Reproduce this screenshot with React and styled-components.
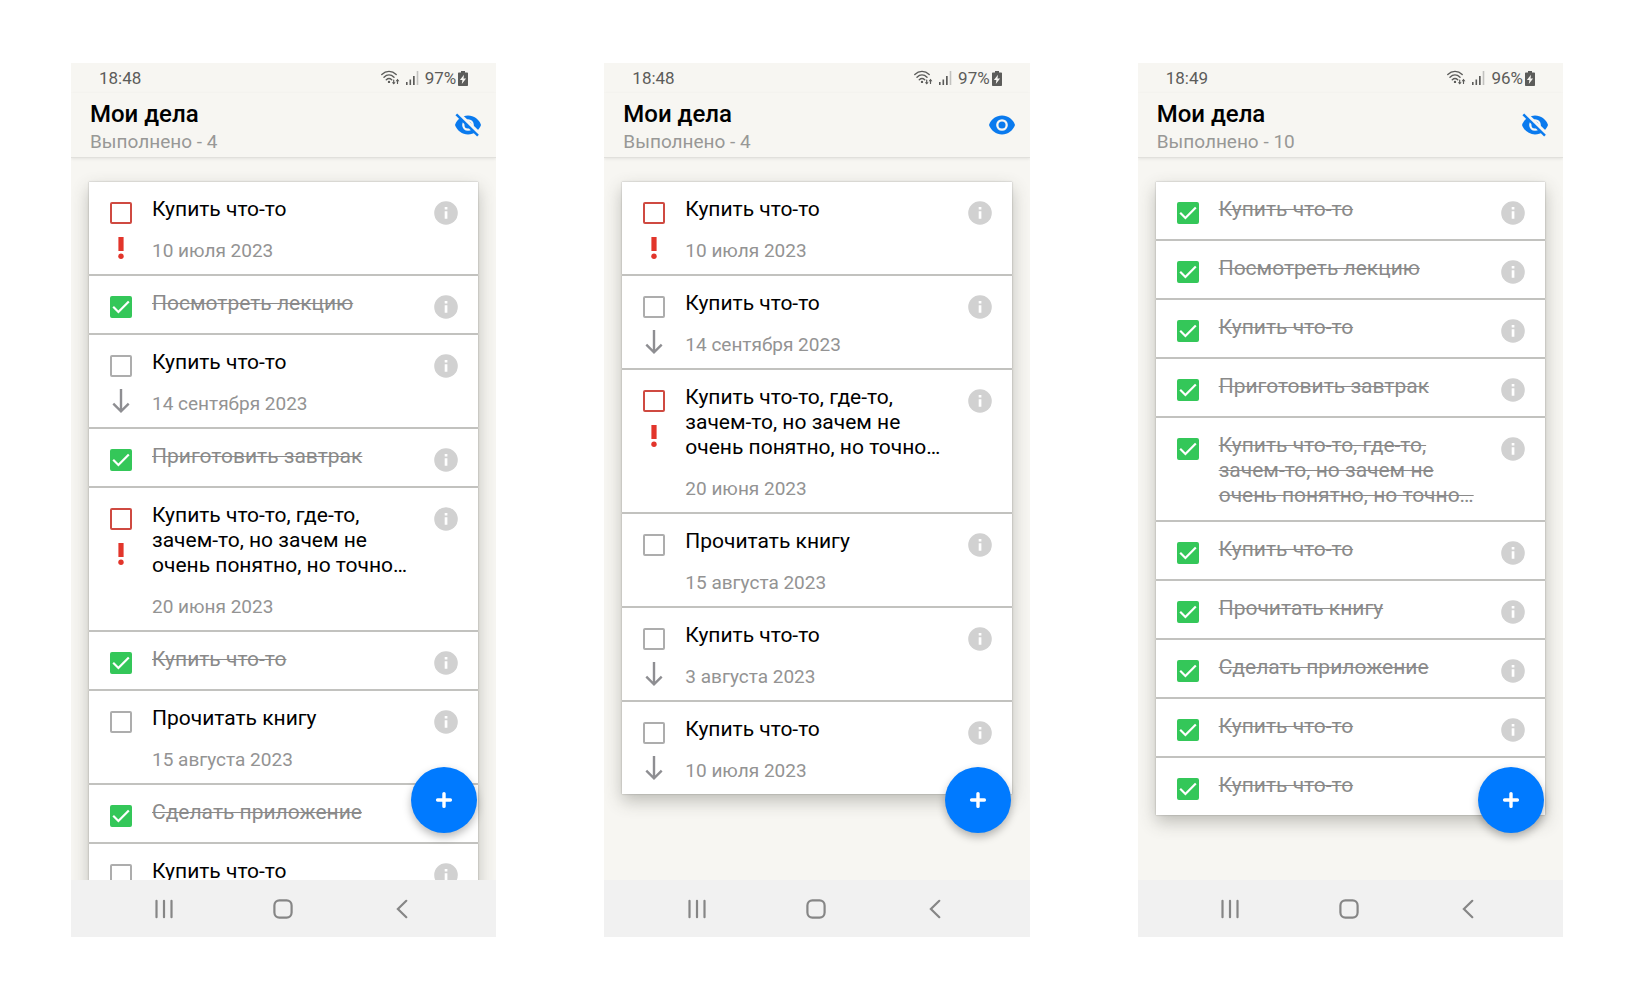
import React from 'react';
import styled, { createGlobalStyle, css } from 'styled-components';

const GlobalStyle = createGlobalStyle`
  * { box-sizing: border-box; }
  body {
    margin: 0;
    background: #ffffff;
    font-family: Roboto, "Noto Sans", sans-serif;
    color: #000000;
  }
  button {
    display: grid;
    place-items: center;
    margin: 0;
    padding: 0;
    border: 0;
    background: none;
    cursor: pointer;
  }
  svg { display: block; }
`;

const Gallery = styled.main`
  display: grid;
  grid-template-columns: repeat(3, minmax(0, 1fr));
  gap: 108px;
  height: 100vh;
  min-height: 640px;
  padding: 63px 71px;
`;

const Phone = styled.section`
  position: relative;
  display: flex;
  flex-direction: column;
  min-height: 0;
  overflow: hidden;
  background: #f7f6f2;
`;

const StatusBar = styled.div`
  display: flex;
  align-items: center;
  flex: none;
  height: 30px;
  padding: 0 28px;
  font-size: 17px;
  line-height: 20px;
  color: #5c5c5a;
`;

const StatusIcons = styled.div`
  display: flex;
  align-items: center;
  gap: 6px;
  margin-left: auto;
`;

const Charge = styled.span`
  display: flex;
  align-items: center;
  gap: 2px;
`;

const Header = styled.header`
  position: relative;
  display: flex;
  align-items: flex-start;
  justify-content: space-between;
  flex: none;
  padding: 6px 15px 2px 19px;
  border-bottom: 1px solid #e1e0dc;
  box-shadow: 0 1px 3px rgba(0, 0, 0, 0.08);
`;

const Title = styled.h1`
  margin: 0;
  font-size: 24px;
  font-weight: 500;
  line-height: 30px;
`;

const Subtitle = styled.p`
  margin: 0;
  font-size: 19px;
  line-height: 26px;
  color: #989896;
`;

const EyeButton = styled.button`
  margin-top: 14px;
  color: #0a7aee;
`;

const Screen = styled.div`
  flex: 1;
  min-height: 0;
  overflow: hidden;
  padding: 24px 18px;
`;

const TaskList = styled.ul`
  display: flex;
  flex-direction: column;
  gap: 2px;
  margin: 0;
  padding: 0;
  list-style: none;
  background: #c9c9c6;
  box-shadow: 0 0 2px rgba(60, 60, 50, 0.2), 0 7px 16px rgba(60, 60, 50, 0.3);
`;

const Task = styled.li`
  display: grid;
  grid-template-columns: 22px minmax(0, 1fr) 24px;
  align-items: start;
  column-gap: 20px;
  min-height: 57px;
  padding: 0 20px 0 21px;
  background: #ffffff;
  box-shadow: 0 0 1px rgba(0, 0, 0, 0.2);
`;

const Marks = styled.div`
  display: flex;
  flex-direction: column;
  align-items: center;
  gap: 12px;
  padding-top: 20px;
`;

const CheckWrap = styled.span`
  display: grid;
  place-items: center;

  & > * { grid-area: 1 / 1; }
  & > svg { pointer-events: none; }
`;

const Check = styled.input`
  appearance: none;
  width: 22px;
  height: 22px;
  margin: 0;
  border: 2px solid ${(p) => (p.$urgent ? '#cf4a41' : '#adadad')};
  border-radius: 2px;
  background: #ffffff;

  &:checked {
    border-color: #34c759;
    background: #34c759;
  }
`;

const Body = styled.div`
  padding: 15px 0 12px;
`;

const Name = styled.label`
  display: block;
  font-size: 21px;
  line-height: 25px;
  ${(p) => p.$done && css`
    color: #8a8a8a;
    text-decoration: line-through;
    text-decoration-thickness: 1px;
  `}
`;

const Due = styled.time`
  display: block;
  margin-top: 18px;
  font-size: 19px;
  line-height: 22px;
  color: #939393;
`;

const InfoButton = styled.button`
  margin-top: 19px;
`;

const AddButton = styled.button`
  position: absolute;
  right: 19px;
  bottom: 104px;
  width: 66px;
  height: 66px;
  border-radius: 50%;
  background: #007aff;
  box-shadow: 0 4px 9px rgba(0, 0, 0, 0.28);
`;

const NavBar = styled.nav`
  display: grid;
  grid-template-columns: repeat(3, 1fr);
  flex: none;
  height: 57px;
  padding: 0 35px 0 33px;
  background: #f1f1f1;
`;

const EyeIcon = ({ crossed }) => (
  <svg width="26" height="24" viewBox="0 0 26 24">
    <path d="M13 2.600C7.100 2.600 2 6.300 0 12c2 5.700 7.100 9.400 13 9.400S24 17.700 26 12C24 6.300 18.900 2.600 13 2.600z" fill="currentColor" />
    <circle cx="13" cy="12" r="4.700" fill="currentColor" stroke="#f7f6f2" strokeWidth="2.300" />
    {crossed && (
      <>
        <path d="M2.500-.2 25 21.600" stroke="#f7f6f2" strokeWidth="4" />
        <path d="M1.300 1.300 23 22.700" stroke="currentColor" strokeWidth="2.400" />
      </>
    )}
  </svg>
);

const WifiIcon = () => (
  <svg width="19" height="16" viewBox="0 0 19 16" fill="none" stroke="#5c5c5a" strokeWidth="1.4" strokeLinecap="round">
    <path d="M.8 4.400C5 .4 11 .4 15.200 4.400M3 7.200c3-2.900 7-2.900 10 0M5.300 9.700c1.700-1.600 3.700-1.600 5.400 0" />
    <circle cx="8" cy="11.900" r="1.200" fill="#5c5c5a" stroke="none" />
    <path d="M12.700 10v3.500M16.500 13.500V10" strokeWidth="1.200" />
    <path d="M10.800 12.200h3.800l-1.900 2.400zM14.600 11.200h3.800l-1.900-2.400z" fill="#5c5c5a" stroke="none" />
  </svg>
);

const SignalIcon = () => (
  <svg width="13" height="14" viewBox="0 0 13 14">
    <path d="M0 11h1.600v3H0zM3.500 8.500h1.600V14H3.500zM7 5h1.700v9H7z" fill="#5c5c5a" />
    <path d="M10.700 0h1.600v14h-1.600z" fill="#c2c2bf" />
  </svg>
);

const BatteryIcon = () => (
  <svg width="10" height="15" viewBox="0 0 10 15">
    <path d="M3 0h4v1.500h2.200q.8 0 .8.800v11.900q0 .8-.8.800H.8q-.8 0-.8-.8V2.300q0-.8.800-.8H3z" fill="#5c5c5a" />
    <path d="M6 3.700 1.900 9h2.500l-.6 4L8.100 7.600H5.500z" fill="#f7f6f2" />
  </svg>
);

const TickIcon = () => (
  <svg width="22" height="22" viewBox="0 0 22 22" fill="none" stroke="#fff" strokeWidth="2.200">
    <path d="m3.200 10.800 5.200 5.200L18.800 5.400" />
  </svg>
);

const UrgentIcon = () => (
  <svg width="22" height="24" viewBox="0 0 22 24" fill="#e2352b">
    <path d="M8.400 1h5.200v14H8.400z" />
    <circle cx="11" cy="20.200" r="2.700" />
  </svg>
);

const LowIcon = () => (
  <svg width="22" height="24" viewBox="0 0 22 24" fill="none" stroke="#8e8e92" strokeWidth="2.400">
    <path d="M11 0v22M3.300 14.600 11 22.300l7.700-7.700" />
  </svg>
);

const InfoIcon = () => (
  <svg width="24" height="24" viewBox="0 0 24 24">
    <circle cx="12" cy="12" r="11.800" fill="#d1d1d1" />
    <path d="M10.700 10.300h2.700v7.500h-2.700zM10.700 6h2.700v2.600h-2.700z" fill="#fff" />
  </svg>
);

const PlusIcon = () => (
  <svg width="18" height="18" viewBox="0 0 18 18" stroke="#fff" strokeWidth="3.400" strokeLinecap="round">
    <path d="M9 2.600v12.800M2.600 9h12.800" />
  </svg>
);

const RecentsIcon = () => (
  <svg width="20" height="20" viewBox="0 0 20 20" stroke="#868686" strokeWidth="2.200" strokeLinecap="round">
    <path d="M2.500 1.800v16.400M10 1.800v16.400M17.500 1.800v16.400" />
  </svg>
);

const HomeIcon = () => (
  <svg width="20" height="20" viewBox="0 0 20 20" fill="none" stroke="#868686" strokeWidth="2.200">
    <rect x="1.400" y="1.400" width="17.200" height="17.200" rx="5" />
  </svg>
);

const BackIcon = () => (
  <svg width="12" height="20" viewBox="0 0 12 20" fill="none" stroke="#868686" strokeWidth="2.200" strokeLinecap="round">
    <path d="M10.300 1.800 1.900 10l8.400 8.200" />
  </svg>
);

const buy = 'Купить что-то';
const longName = 'Купить что-то, где-то, зачем-то, но зачем не очень понятно, но точно…';

const screens = [
  {
    time: '18:48', charge: '97%', done: 4, showsDone: true,
    tasks: [
      { name: buy, due: '10 июля 2023', priority: 'high' },
      { name: 'Посмотреть лекцию', done: true },
      { name: buy, due: '14 сентября 2023', priority: 'low' },
      { name: 'Приготовить завтрак', done: true },
      { name: longName, due: '20 июня 2023', priority: 'high' },
      { name: buy, done: true },
      { name: 'Прочитать книгу', due: '15 августа 2023' },
      { name: 'Сделать приложение', done: true },
      { name: buy },
    ],
  },
  {
    time: '18:48', charge: '97%', done: 4, showsDone: false,
    tasks: [
      { name: buy, due: '10 июля 2023', priority: 'high' },
      { name: buy, due: '14 сентября 2023', priority: 'low' },
      { name: longName, due: '20 июня 2023', priority: 'high' },
      { name: 'Прочитать книгу', due: '15 августа 2023' },
      { name: buy, due: '3 августа 2023', priority: 'low' },
      { name: buy, due: '10 июля 2023', priority: 'low' },
    ],
  },
  {
    time: '18:49', charge: '96%', done: 10, showsDone: true,
    tasks: [
      buy, 'Посмотреть лекцию', buy, 'Приготовить завтрак', longName,
      buy, 'Прочитать книгу', 'Сделать приложение', buy, buy,
    ].map((name) => ({ name, done: true })),
  },
];

function TaskRow({ id, task }) {
  return (
    <Task>
      <Marks>
        <CheckWrap>
          <Check id={id} type="checkbox" defaultChecked={task.done} $urgent={task.priority === 'high'} />
          {task.done && <TickIcon />}
        </CheckWrap>
        {task.priority === 'high' && <UrgentIcon />}
        {task.priority === 'low' && <LowIcon />}
      </Marks>
      <Body>
        <Name htmlFor={id} $done={task.done}>{task.name}</Name>
        {task.due && <Due>{task.due}</Due>}
      </Body>
      <InfoButton type="button" aria-label="Подробнее"><InfoIcon /></InfoButton>
    </Task>
  );
}

function TodoPhone({ index, data }) {
  return (
    <Phone>
      <StatusBar>
        <span>{data.time}</span>
        <StatusIcons>
          <WifiIcon />
          <SignalIcon />
          <Charge>{data.charge}<BatteryIcon /></Charge>
        </StatusIcons>
      </StatusBar>
      <Header>
        <div>
          <Title>Мои дела</Title>
          <Subtitle>Выполнено - {data.done}</Subtitle>
        </div>
        <EyeButton type="button" aria-label="Показать выполненные">
          <EyeIcon crossed={data.showsDone} />
        </EyeButton>
      </Header>
      <Screen>
        <TaskList>
          {data.tasks.map((task, i) => (
            <TaskRow key={i} id={`task-${index}-${i}`} task={task} />
          ))}
        </TaskList>
      </Screen>
      <AddButton type="button" aria-label="Добавить"><PlusIcon /></AddButton>
      <NavBar>
        <button type="button" aria-label="Недавние"><RecentsIcon /></button>
        <button type="button" aria-label="Домой"><HomeIcon /></button>
        <button type="button" aria-label="Назад"><BackIcon /></button>
      </NavBar>
    </Phone>
  );
}

export default function App() {
  return (
    <>
      <GlobalStyle />
      <Gallery>
        {screens.map((data, i) => <TodoPhone key={i} index={i} data={data} />)}
      </Gallery>
    </>
  );
}
